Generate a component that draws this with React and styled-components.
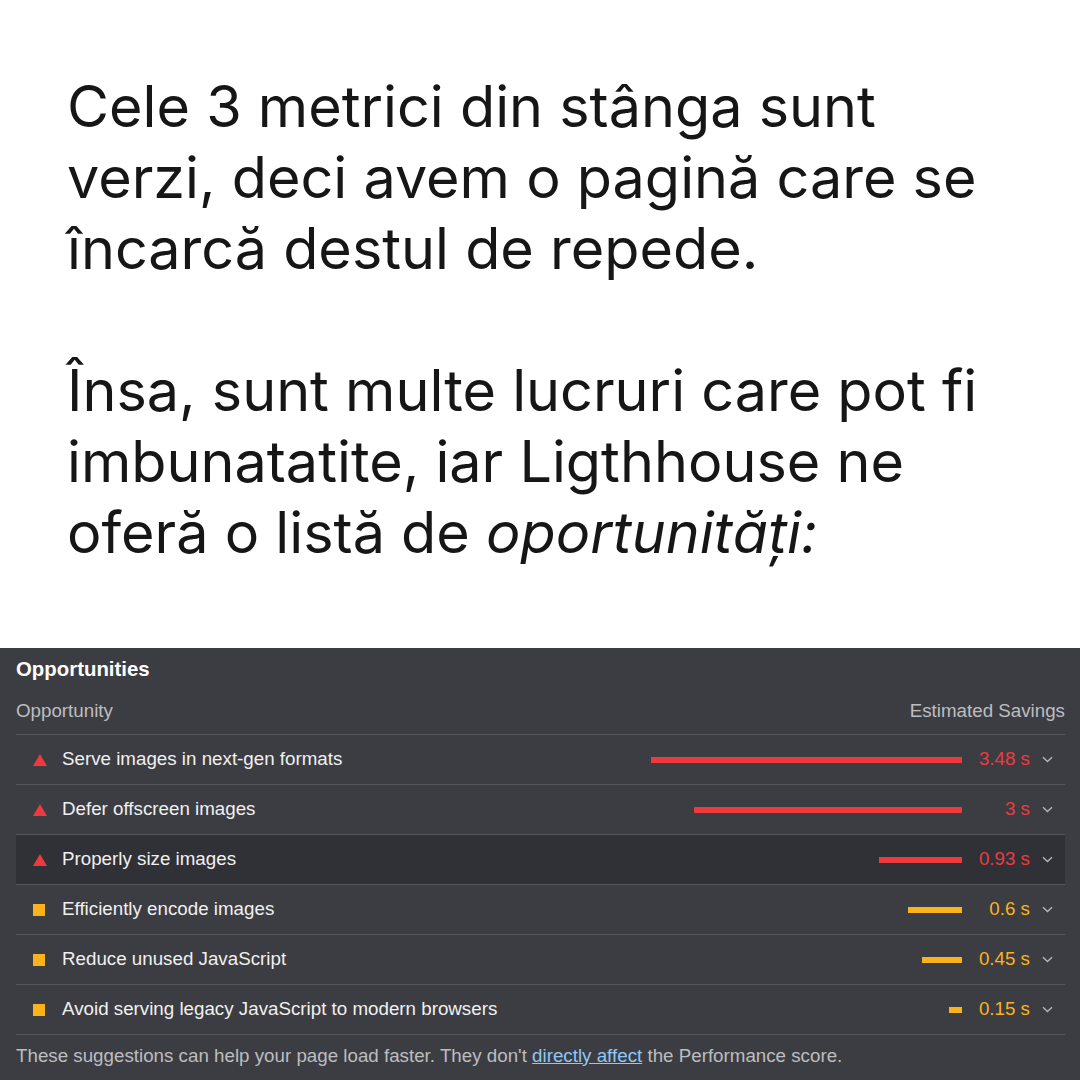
import React from "react";
import styled, { createGlobalStyle } from "styled-components";

const GlobalStyle = createGlobalStyle`
  html, body {
    margin: 0;
    padding: 0;
    background: #ffffff;
  }
  #root {
    width: 1080px;
    height: 1080px;
    display: flex;
    flex-direction: column;
    overflow: hidden;
  }
`;

const Intro = styled.div`
  flex: 1;
  padding: 71px 20px 0 67px;
  font-family: Inter, "Noto Sans", sans-serif;
  font-size: 57.5px;
  line-height: 71px;
  color: #161616;
  white-space: nowrap;

  p {
    margin: 0 0 71px;
  }
  em {
    font-style: italic;
  }
`;

const Panel = styled.div`
  height: 432px;
  background: #3c3d42;
  padding: 0 15px 0 16px;
  box-sizing: border-box;
  font-family: "Liberation Sans", Arial, sans-serif;
  font-size: 18.75px;
  color: #e8e8e8;
`;

const Title = styled.div`
  font-weight: bold;
  font-size: 20.4px;
  color: #ffffff;
  height: 42px;
  line-height: 42px;
`;

const HeaderRow = styled.div`
  display: flex;
  justify-content: space-between;
  color: #bcbdc0;
  height: 44px;
  line-height: 42px;
  border-bottom: 1px solid #55565b;
`;

const Row = styled.div`
  display: flex;
  align-items: center;
  height: 49px;
  border-bottom: 1px solid #55565b;
  background: ${(p) => (p.$active ? "#303136" : "transparent")};
`;

const IconBox = styled.div`
  width: 46px;
  display: flex;
  justify-content: center;
`;

const Triangle = styled.span`
  width: 0;
  height: 0;
  border-left: 7px solid transparent;
  border-right: 7px solid transparent;
  border-bottom: 12px solid #ee3a3f;
  margin-left: 1px;
`;

const Square = styled.span`
  width: 12px;
  height: 12px;
  background: #fbb21c;
`;

const Label = styled.div`
  flex: 1;
  color: #f0f0f0;
  padding-bottom: 2px;
`;

const Bar = styled.div`
  height: 6px;
  background: ${(p) => p.$color};
`;

const Value = styled.div`
  width: 68px;
  text-align: right;
  color: ${(p) => p.$color};
  padding-bottom: 2px;
`;

const Chevron = styled.div`
  width: 35px;
  display: flex;
  justify-content: center;
  color: #b5b6b9;
`;

const Footer = styled.div`
  color: #bcbdc0;
  line-height: 42px;

  a {
    color: #8fc8f4;
    text-decoration: underline;
  }
`;

const RED = "#ee3a3f";
const AMBER = "#fbb21c";

const rows = [
  { label: "Serve images in next-gen formats", bar: 311, value: "3.48 s", kind: "fail" },
  { label: "Defer offscreen images", bar: 268, value: "3 s", kind: "fail" },
  { label: "Properly size images", bar: 83, value: "0.93 s", kind: "fail", active: true },
  { label: "Efficiently encode images", bar: 54, value: "0.6 s", kind: "avg" },
  { label: "Reduce unused JavaScript", bar: 40, value: "0.45 s", kind: "avg" },
  { label: "Avoid serving legacy JavaScript to modern browsers", bar: 13, value: "0.15 s", kind: "avg" },
];

const ChevronIcon = () => (
  <svg width="11" height="7" viewBox="0 0 11 7" fill="none">
    <path d="M1 1.2l4.5 4.3L10 1.2" stroke="currentColor" strokeWidth="1.4" />
  </svg>
);

const App = () => {
  return (
    <>
      <GlobalStyle />
      <Intro>
        <p>
          Cele 3 metrici din stânga sunt
          <br />
          verzi, deci avem o pagină care se
          <br />
          încarcă destul de repede.
        </p>
        <p>
          Însa, sunt multe lucruri care pot fi
          <br />
          imbunatatite, iar Ligthhouse ne
          <br />
          oferă o listă de <em>oportunități:</em>
        </p>
      </Intro>
      <Panel>
        <Title>Opportunities</Title>
        <HeaderRow>
          <span>Opportunity</span>
          <span>Estimated Savings</span>
        </HeaderRow>
        {rows.map((r) => {
          const color = r.kind === "fail" ? RED : AMBER;
          return (
            <Row key={r.label} $active={r.active}>
              <IconBox>{r.kind === "fail" ? <Triangle /> : <Square />}</IconBox>
              <Label>{r.label}</Label>
              <Bar $color={color} style={{ width: r.bar }} />
              <Value $color={color}>{r.value}</Value>
              <Chevron>
                <ChevronIcon />
              </Chevron>
            </Row>
          );
        })}
        <Footer>
          These suggestions can help your page load faster. They don't{" "}
          <a href="#">directly affect</a> the Performance score.
        </Footer>
      </Panel>
    </>
  );
};

export default App;
